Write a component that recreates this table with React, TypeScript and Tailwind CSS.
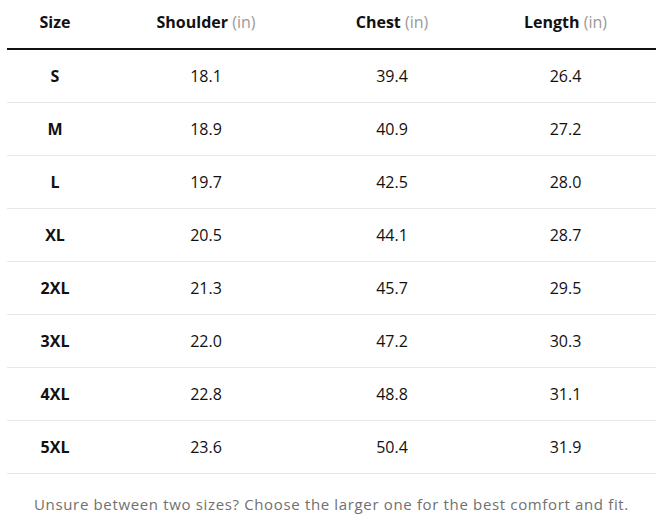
import React from "react";

const rows = [
  ["S", "18.1", "39.4", "26.4"],
  ["M", "18.9", "40.9", "27.2"],
  ["L", "19.7", "42.5", "28.0"],
  ["XL", "20.5", "44.1", "28.7"],
  ["2XL", "21.3", "45.7", "29.5"],
  ["3XL", "22.0", "47.2", "30.3"],
  ["4XL", "22.8", "48.8", "31.1"],
  ["5XL", "23.6", "50.4", "31.9"],
];

export default function App() {
  return (
    <div className="bg-white w-[657px] h-[522px] pl-[7px] pr-[1px]" style={{ fontFamily: '"Open Sans", "Noto Sans", sans-serif' }}>
      <table className="w-[649px] border-collapse text-[16px] text-[#111111]">
        <thead>
          <tr className="border-b-2 border-[#111111]">
            <th className="w-[96px] h-[49px] pb-[4px] font-bold text-center">Size</th>
            <th className="w-[206px] h-[49px] pb-[4px] font-bold text-center">
              Shoulder <span className="font-normal text-[#9a9a9a]">(in)</span>
            </th>
            <th className="w-[166px] h-[49px] pb-[4px] font-bold text-center">
              Chest <span className="font-normal text-[#9a9a9a]">(in)</span>
            </th>
            <th className="w-[181px] h-[49px] pb-[4px] font-bold text-center">
              Length <span className="font-normal text-[#9a9a9a]">(in)</span>
            </th>
          </tr>
        </thead>
        <tbody>
          {rows.map((r) => (
            <tr key={r[0]} className="border-b border-[#e8e8e8]">
              <td className="h-[53px] text-center font-bold">{r[0]}</td>
              <td className="h-[53px] text-center">{r[1]}</td>
              <td className="h-[53px] text-center">{r[2]}</td>
              <td className="h-[53px] text-center">{r[3]}</td>
            </tr>
          ))}
        </tbody>
      </table>
      <p className="mt-[19px] text-center text-[15px] tracking-[0.65px] text-[#707070]">
        Unsure between two sizes? Choose the larger one for the best comfort and fit.
      </p>
    </div>
  );
}
